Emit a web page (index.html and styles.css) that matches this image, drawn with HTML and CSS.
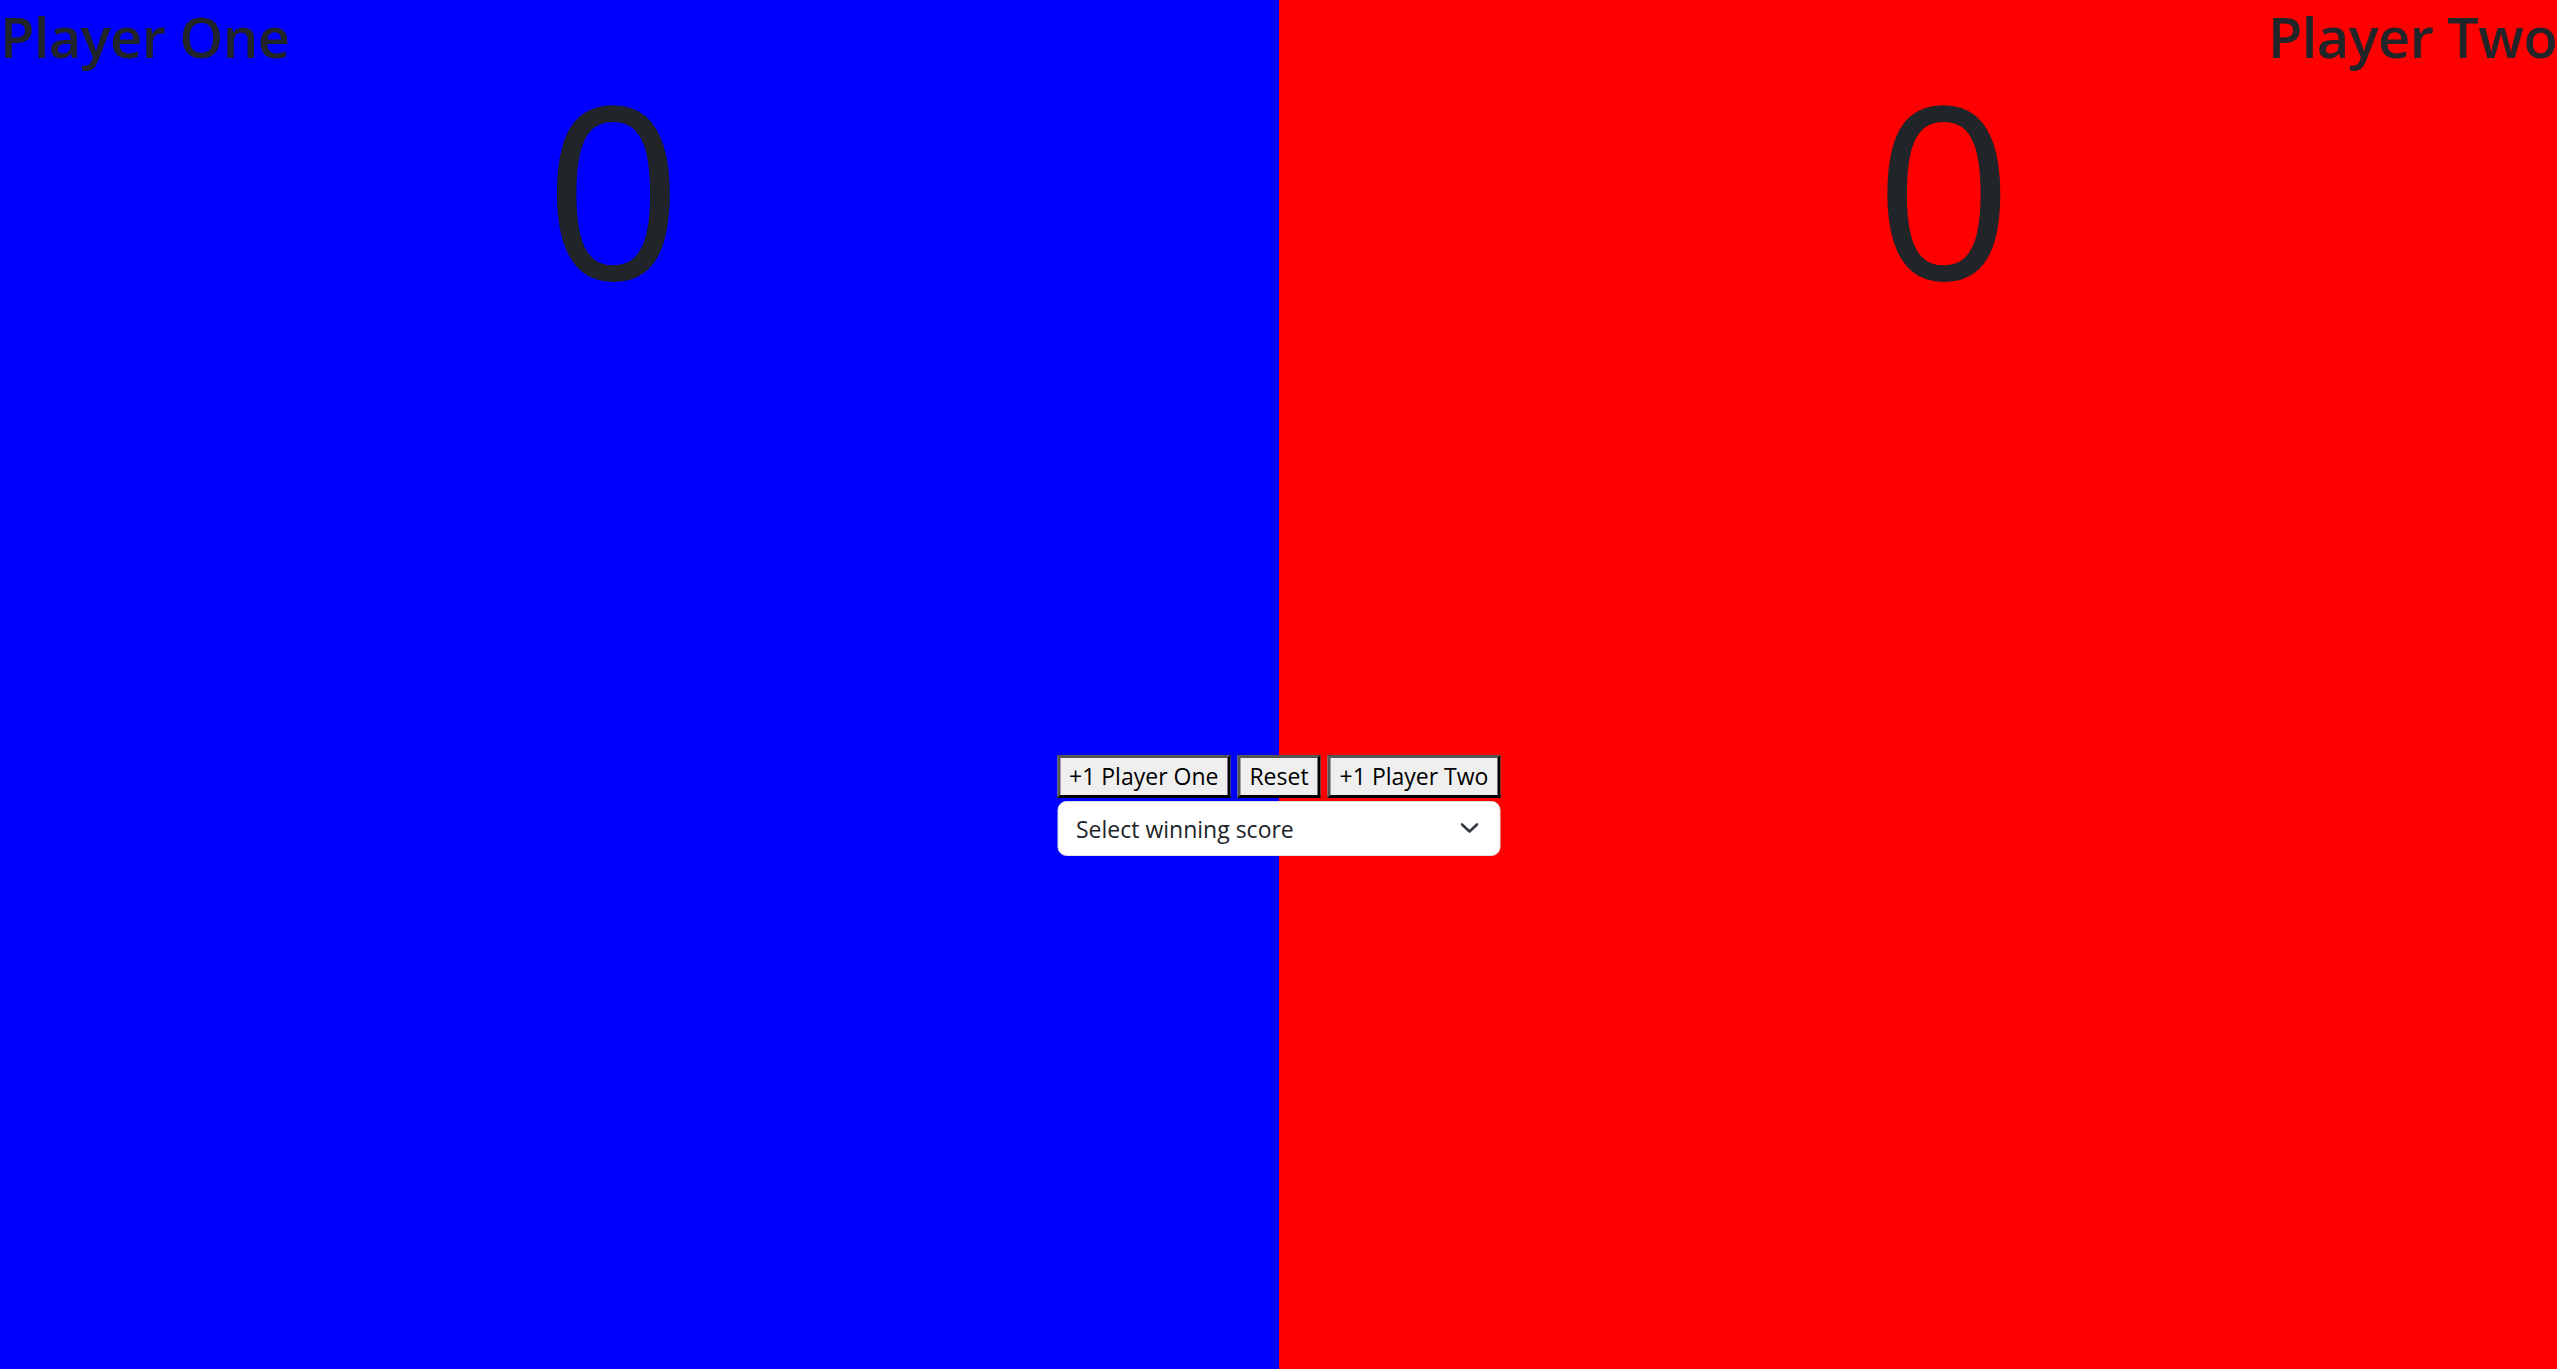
FILE: index.html
```html
<!DOCTYPE html>
<html lang="en">
<head>
<meta charset="utf-8">
<title>Score Keeper</title>
<link rel="stylesheet" href="styles.css">
</head>
<body>
<main class="board">
  <section class="side side-one">
    <h1 class="player-name">Player One</h1>
    <div class="score">0</div>
  </section>
  <section class="side side-two">
    <h1 class="player-name">Player Two</h1>
    <div class="score">0</div>
  </section>
  <div class="controls">
    <div class="button-row">
      <button class="btn">+1 Player One</button>
      <button class="btn">Reset</button>
      <button class="btn">+1 Player Two</button>
    </div>
    <div class="select-wrap">
      <select class="winning-select">
        <option>Select winning score</option>
        <option>3</option>
        <option>5</option>
        <option>7</option>
      </select>
      <svg class="chevron" width="18" height="10" viewBox="0 0 18 10" aria-hidden="true">
        <path d="M1.5 1.5L9 8.5L16.5 1.5" fill="none" stroke="#343a40" stroke-width="2.6" stroke-linecap="round" stroke-linejoin="round"/>
      </svg>
    </div>
  </div>
</main>
</body>
</html>
```

FILE: styles.css
```css
html, body {
  margin: 0;
  padding: 0;
  height: 100%;
}

body {
  font-family: "Open Sans", "Noto Sans", sans-serif;
  color: #212529;
  overflow: hidden;
}

.board {
  position: relative;
  display: grid;
  grid-template-columns: 1fr 1fr;
  height: 100vh;
}

.side {
  display: flex;
  flex-direction: column;
}

.side-one {
  background: #0000ff;
}

.side-two {
  background: #ff0000;
}

.player-name {
  margin: 0;
  font-size: 56px;
  font-weight: 600;
  line-height: 72px;
  letter-spacing: -0.6px;
}

.side-two .player-name {
  text-align: right;
}

.score {
  margin-top: -5px;
  font-size: 240px;
  font-weight: 400;
  line-height: 1;
  text-align: center;
}

.side-one .score {
  padding-right: 52px;
}

.side-two .score {
  padding-left: 52px;
}

.controls {
  position: absolute;
  top: 755px;
  left: 50%;
  transform: translateX(-50%);
  width: 443px;
  display: flex;
  flex-direction: column;
  gap: 3px;
}

.button-row {
  display: flex;
  gap: 7px;
  white-space: nowrap;
}

.btn {
  flex: none;
  font-family: "Open Sans", "Noto Sans", sans-serif;
  font-size: 23px;
  line-height: 37px;
  white-space: nowrap;
  color: #000;
  background: #efefef;
  padding: 0 9px;
  border: 3px solid;
  border-color: #555 #000 #000 #555;
  border-radius: 0;
  margin: 0;
}

.select-wrap {
  position: relative;
}

.winning-select {
  appearance: none;
  -webkit-appearance: none;
  display: block;
  width: 100%;
  height: 55px;
  box-sizing: border-box;
  padding: 0 54px 0 18px;
  font-family: "Open Sans", "Noto Sans", sans-serif;
  font-size: 23px;
  color: #212529;
  background: #fff;
  border: 1.5px solid #dee2e6;
  border-radius: 9px;
  margin: 0;
}

.chevron {
  position: absolute;
  right: 22px;
  top: 22px;
  pointer-events: none;
}
```
